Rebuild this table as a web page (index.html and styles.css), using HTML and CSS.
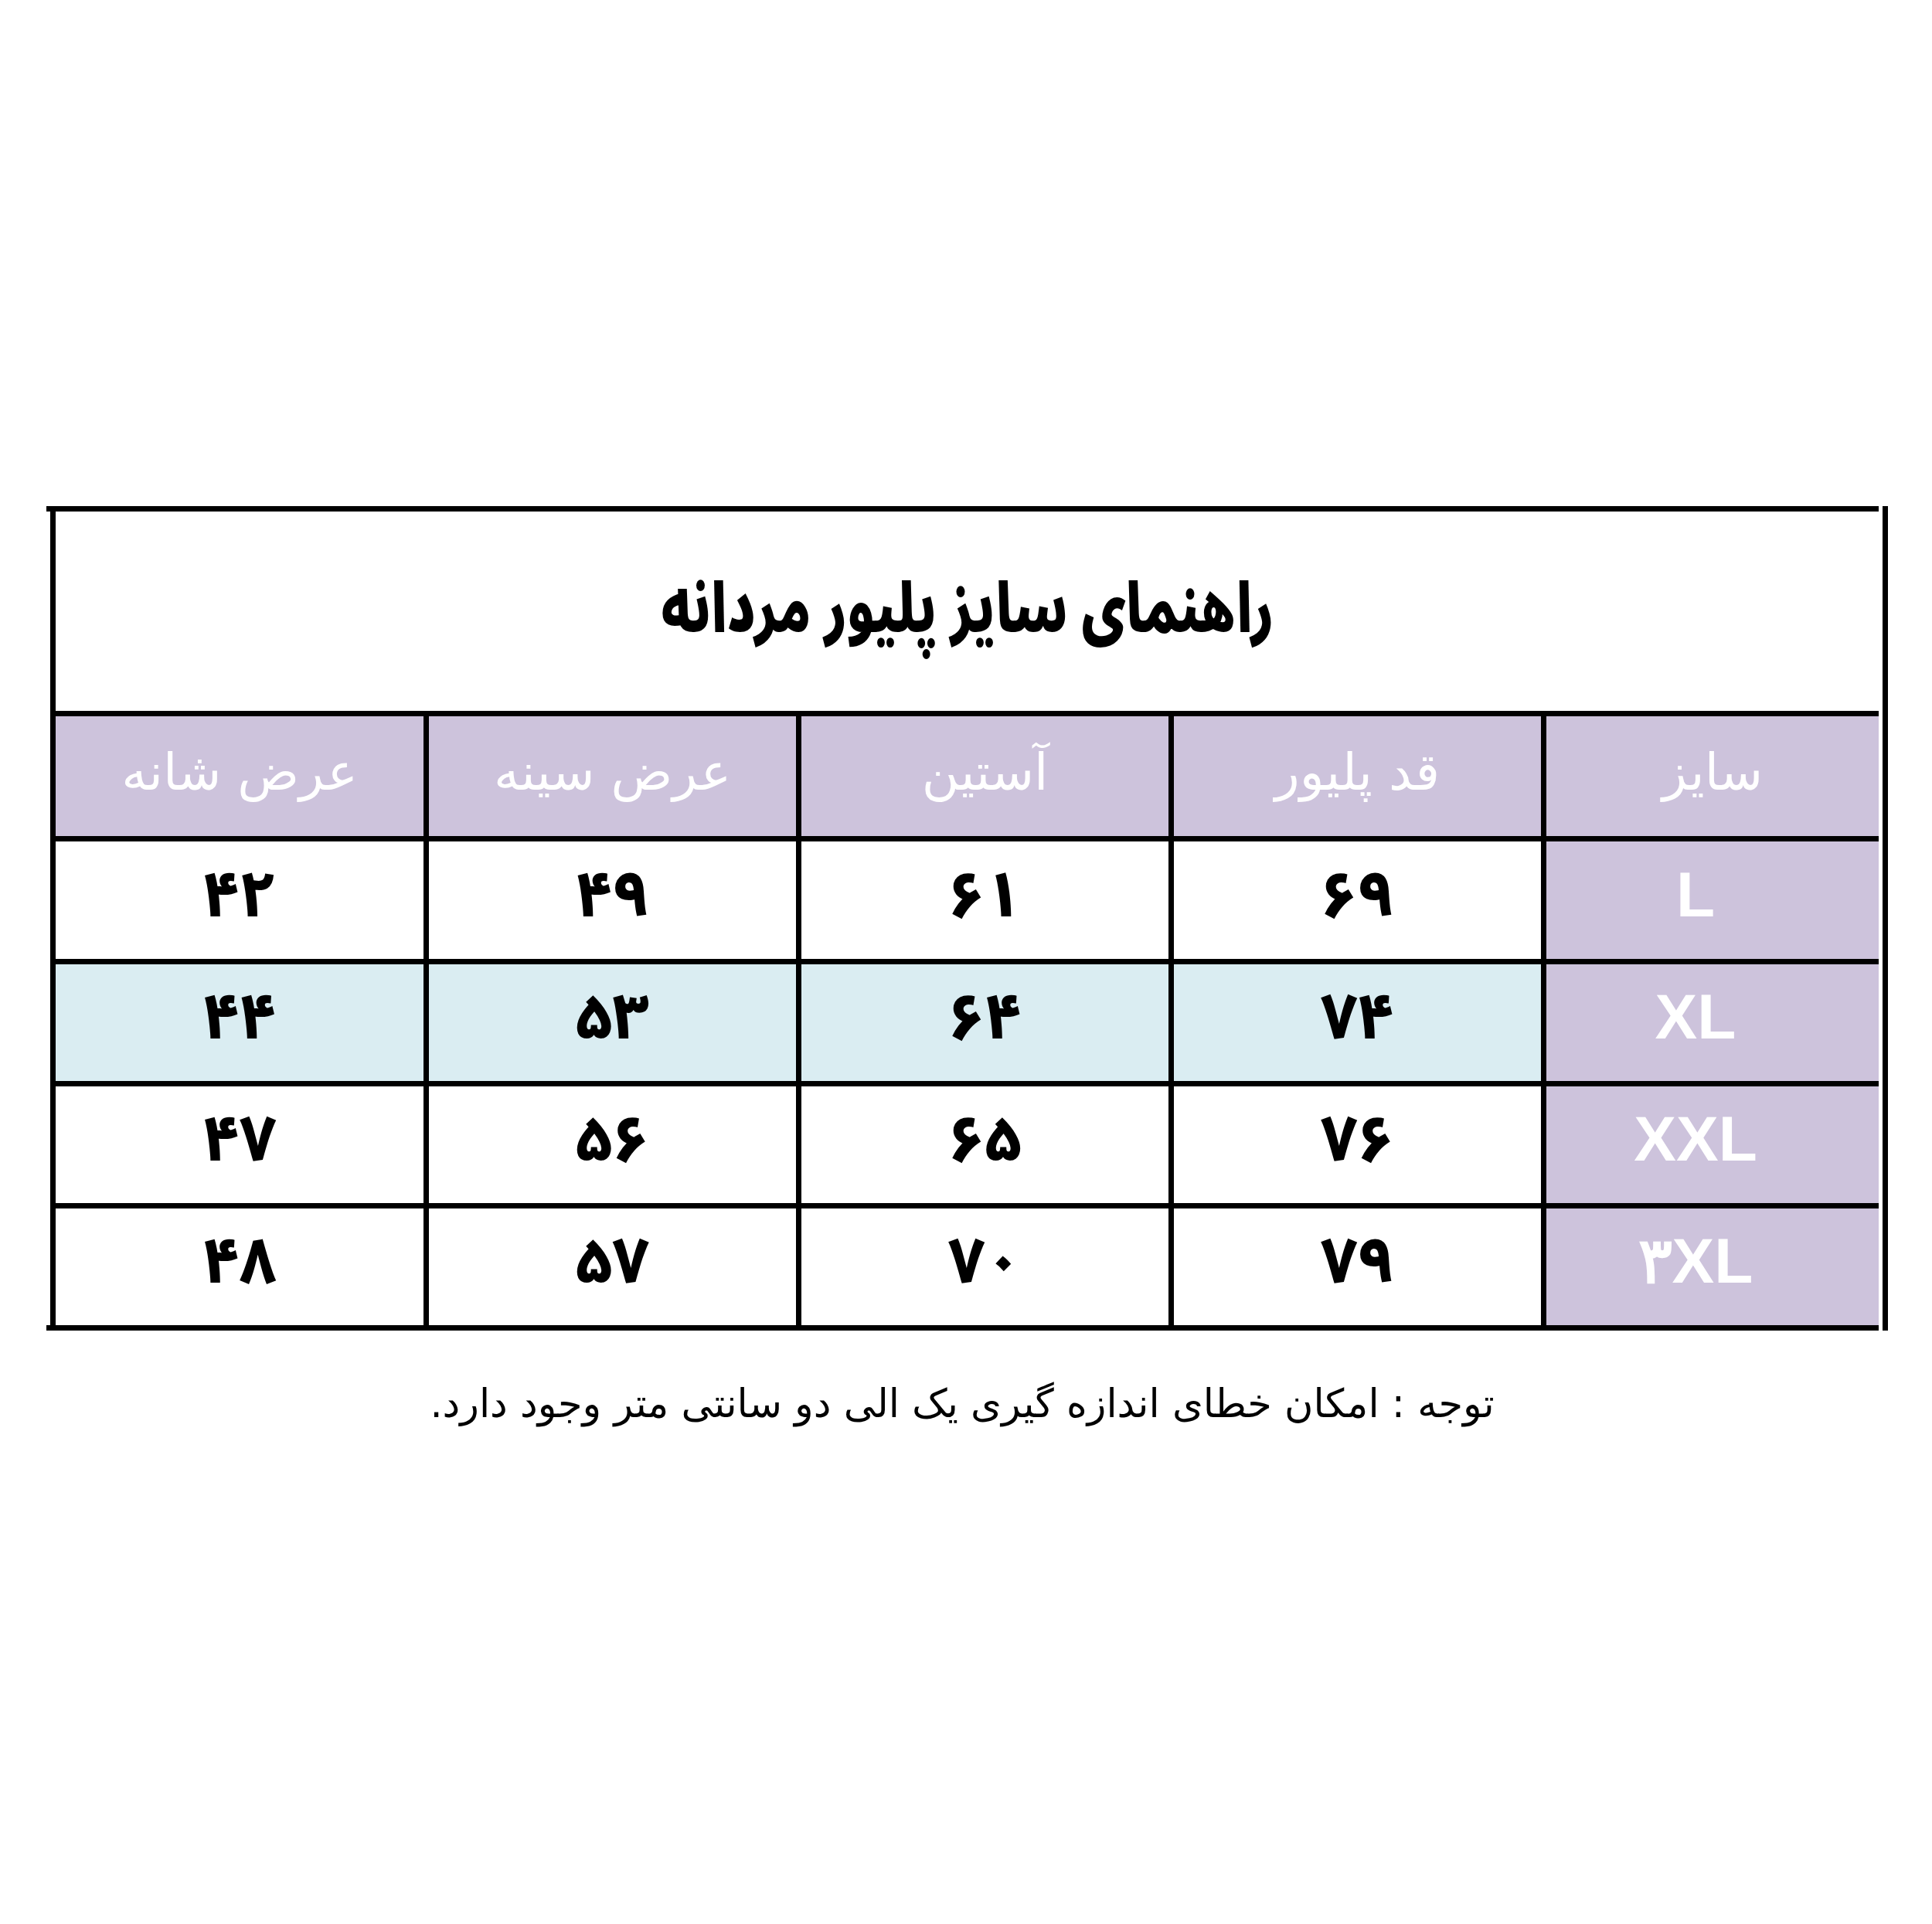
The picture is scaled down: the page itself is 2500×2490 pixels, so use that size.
FILE: index.html
```html
<!DOCTYPE html>
<html lang="fa">
<head>
<meta charset="utf-8">
<title>راهنمای سایز پلیور مردانه</title>
<link rel="stylesheet" href="styles.css">
</head>
<body>
<main class="page">
  <div class="sheet">
    <span class="edge-line"></span>
    <div class="table">
      <div class="title-row"><h1 class="title">راهنمای سایز پلیور مردانه</h1></div>
      <div class="row head">
        <div class="cell label">سایز</div>
        <div class="cell">قد پلیور</div>
        <div class="cell">آستین</div>
        <div class="cell">عرض سینه</div>
        <div class="cell">عرض شانه</div>
      </div>
      <div class="row">
        <div class="cell label size">L</div>
        <div class="cell num">۶۹</div>
        <div class="cell num">۶۱</div>
        <div class="cell num">۴۹</div>
        <div class="cell num">۴۲</div>
      </div>
      <div class="row alt">
        <div class="cell label size">XL</div>
        <div class="cell num">۷۴</div>
        <div class="cell num">۶۴</div>
        <div class="cell num">۵۳</div>
        <div class="cell num">۴۴</div>
      </div>
      <div class="row">
        <div class="cell label size">XXL</div>
        <div class="cell num">۷۶</div>
        <div class="cell num">۶۵</div>
        <div class="cell num">۵۶</div>
        <div class="cell num">۴۷</div>
      </div>
      <div class="row last">
        <div class="cell label size">۳XL</div>
        <div class="cell num">۷۹</div>
        <div class="cell num">۷۰</div>
        <div class="cell num">۵۷</div>
        <div class="cell num">۴۸</div>
      </div>
    </div>
  </div>
  <p class="note">توجه : امکان خطای اندازه گیری یک الی دو سانتی متر وجود دارد.</p>
</main>
</body>
</html>
```
FILE: styles.css
```css
html, body {
  margin: 0;
  padding: 0;
  background: #ffffff;
}

body {
  width: 2500px;
  height: 2490px;
  font-family: "DejaVu Sans", sans-serif;
  color: #000000;
}

.page {
  padding-top: 655px;
}

.sheet {
  display: flex;
  flex-direction: row-reverse;
  gap: 5px;
  width: 2383px;
  margin-left: 60px;
  margin-right: auto;
}

.edge-line {
  width: 7px;
  background: #000000;
  flex: none;
}

.table {
  width: 2371px;
  flex: none;
  border-top: 7px solid #000000;
  border-bottom: 7px solid #000000;
  display: flex;
  flex-direction: column;
  direction: rtl;
}

.title-row {
  height: 258px;
  margin-left: 5px;
  border-left: 7px solid #000000;
  display: flex;
  align-items: center;
  justify-content: center;
  background: #ffffff;
}

.title {
  margin: 0;
  font-family: "Noto Sans Arabic", "DejaVu Sans", sans-serif;
  font-weight: 900;
  font-size: 88px;
  line-height: 1.2;
  transform: scaleX(0.765);
  white-space: nowrap;
}

.row {
  border-top: 7px solid #000000;
  margin-left: 5px;
  padding-left: 7px;
  background: #000000;
  display: grid;
  grid-template-columns: 430px 475px 475px 475px 476px;
  grid-template-rows: 151px;
  column-gap: 7px;
  height: 151px;
}

.row.head {
  height: 155px;
  grid-template-rows: 155px;
}

.row.head + .row {
  height: 152px;
  grid-template-rows: 152px;
}

.cell {
  background: #ffffff;
  display: flex;
  align-items: center;
  justify-content: center;
  line-height: 1.2;
  min-height: 0;
}

.head .cell {
  background: #cdc3dc;
  color: #ffffff;
  font-size: 66px;
  font-weight: 400;
  padding-bottom: 10px;
}

.alt .cell {
  background: #daedf2;
}

.cell.label,
.alt .cell.label {
  background: #cdc3dc;
  color: #ffffff;
}

.size {
  font-family: "Liberation Sans", Arial, sans-serif;
  font-weight: 700;
  font-size: 82px;
  direction: ltr;
  padding-right: 44px;
  padding-bottom: 14px;
}

.num {
  font-family: "Noto Sans Arabic", "DejaVu Sans", sans-serif;
  font-weight: 800;
  font-size: 82px;
  padding-bottom: 10px;
}

.note {
  margin: 60px 0 0 0;
  padding-right: 10px;
  text-align: center;
  direction: rtl;
  font-family: "DejaVu Sans", sans-serif;
  font-size: 51px;
  line-height: 70px;
}
```
